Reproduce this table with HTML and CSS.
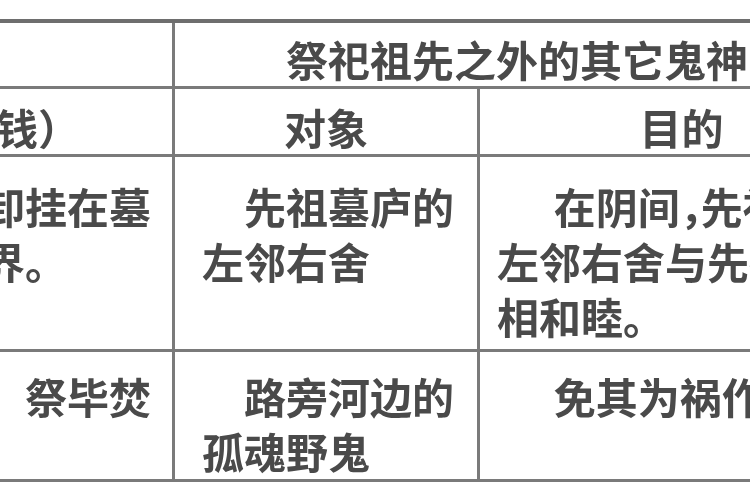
FILE: index.html
```html
<!DOCTYPE html>
<html lang="zh">
<head>
<meta charset="utf-8">
<link rel="stylesheet" href="styles.css">
</head>
<body>
<div class="page">
  <table class="sheet">
    <colgroup>
      <col class="c1">
      <col class="c2">
      <col class="c3">
    </colgroup>
    <tr class="head1">
      <th></th>
      <th colspan="2" class="span">祭祀祖先之外的其它鬼神</th>
    </tr>
    <tr class="head2">
      <th class="h-left">（纸钱）</th>
      <th>对象</th>
      <th>目的</th>
    </tr>
    <tr class="row1">
      <td class="first">纸钱卸挂在墓地之界。</td>
      <td class="obj">先祖墓庐的左邻右舍</td>
      <td class="aim">在阴间<span class="half">，</span>先祖们的左邻右舍与先祖们相和睦。</td>
    </tr>
    <tr class="row2">
      <td class="first">香烛，祭毕焚</td>
      <td class="obj">路旁河边的孤魂野鬼</td>
      <td class="aim">免其为祸作祟。</td>
    </tr>
  </table>
</div>
</body>
</html>
```
FILE: styles.css
```css
html, body {
  margin: 0;
  padding: 0;
  background: #ffffff;
}
body {
  width: 750px;
  height: 500px;
  overflow: hidden;
}
.page {
  padding-top: 19px;
  filter: blur(0.6px);
}
.sheet {
  margin-left: -110px;
  border-collapse: collapse;
  table-layout: fixed;
  width: 993px;
  font-family: "Noto Sans CJK SC", "Noto Sans CJK TC", sans-serif;
  font-weight: 700;
  font-size: 42px;
  line-height: 55px;
  color: #4a4a4a;
}
.c1 { width: 282px; }
.c2 { width: 305px; }
.c3 { width: 406px; }

.sheet th,
.sheet td {
  border: 3px solid #7a7a7a;
  padding: 0;
  overflow: hidden;
  word-break: break-all;
}
.sheet .head1 th {
  border-top: 4px solid #6e6e6e;
  height: 62px;
  padding-top: 8px;
  box-sizing: border-box;
}
.sheet th {
  font-weight: 700;
  text-align: center;
  vertical-align: middle;
}
.sheet .head1 .span {
  text-align: left;
  padding-left: 111px;
}
.sheet .head2 th {
  height: 67px;
  padding-top: 10px;
  box-sizing: border-box;
}
.sheet .head2 .h-left {
  text-align: right;
  padding-right: 92px;
}
.sheet td {
  vertical-align: top;
  text-align: left;
}
.sheet .row1 td {
  height: 195px;
  box-sizing: border-box;
  padding-top: 21px;
}
.sheet .row2 td {
  height: 130px;
  box-sizing: border-box;
  padding-top: 16px;
}
.sheet td.first {
  padding-left: 6px;
  padding-right: 18px;
}
.sheet td.obj {
  padding-left: 27px;
  padding-right: 12px;
  text-indent: 1em;
}
.sheet td.aim {
  padding-left: 17px;
  padding-right: 10px;
  text-indent: 1.35em;
}
.half {
  letter-spacing: -0.5em;
}
```
